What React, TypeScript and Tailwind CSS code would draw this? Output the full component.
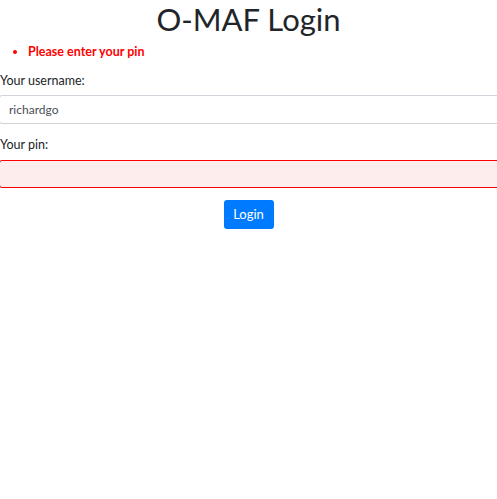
export default function App() {
  return (
    <div className="min-h-screen w-full overflow-hidden bg-white font-['Lato',sans-serif] text-[#212529]">
      <h1 className="m-0 text-center text-[31px] leading-[38px] font-normal">O-MAF Login</h1>

      <ul className="mt-[5px] list-disc pl-[28px] text-[#ff0000] marker:text-[#ff0000]">
        <li className="h-[18px] text-[12.5px] leading-[18px] font-bold">Please enter your pin</li>
      </ul>

      <form className="mt-[11px]">
        <label className="block h-[18px] text-[12.5px] leading-[18px]">Your username:</label>
        <input
          type="text"
          defaultValue="richardgo"
          className="mt-[5px] -ml-px block h-[29px] w-[calc(100%+24px)] rounded-[3px] border border-[#ced4da] bg-white px-[9px] text-[12px] text-[#495057] outline-none"
        />

        <label className="mt-[12px] block h-[18px] text-[12.5px] leading-[18px]">Your pin:</label>
        <input
          type="password"
          className="mt-[6px] -ml-px block h-[28px] w-[calc(100%+24px)] rounded-[3px] border border-[#ff0000] bg-[#fdeded] px-[9px] text-[12px] outline-none"
        />

        <div className="mt-[12px] flex justify-center">
          <button
            type="button"
            className="h-[29px] w-[50px] rounded-[3px] bg-[#007bff] text-[13px] text-white"
          >
            Login
          </button>
        </div>
      </form>
    </div>
  );
}
